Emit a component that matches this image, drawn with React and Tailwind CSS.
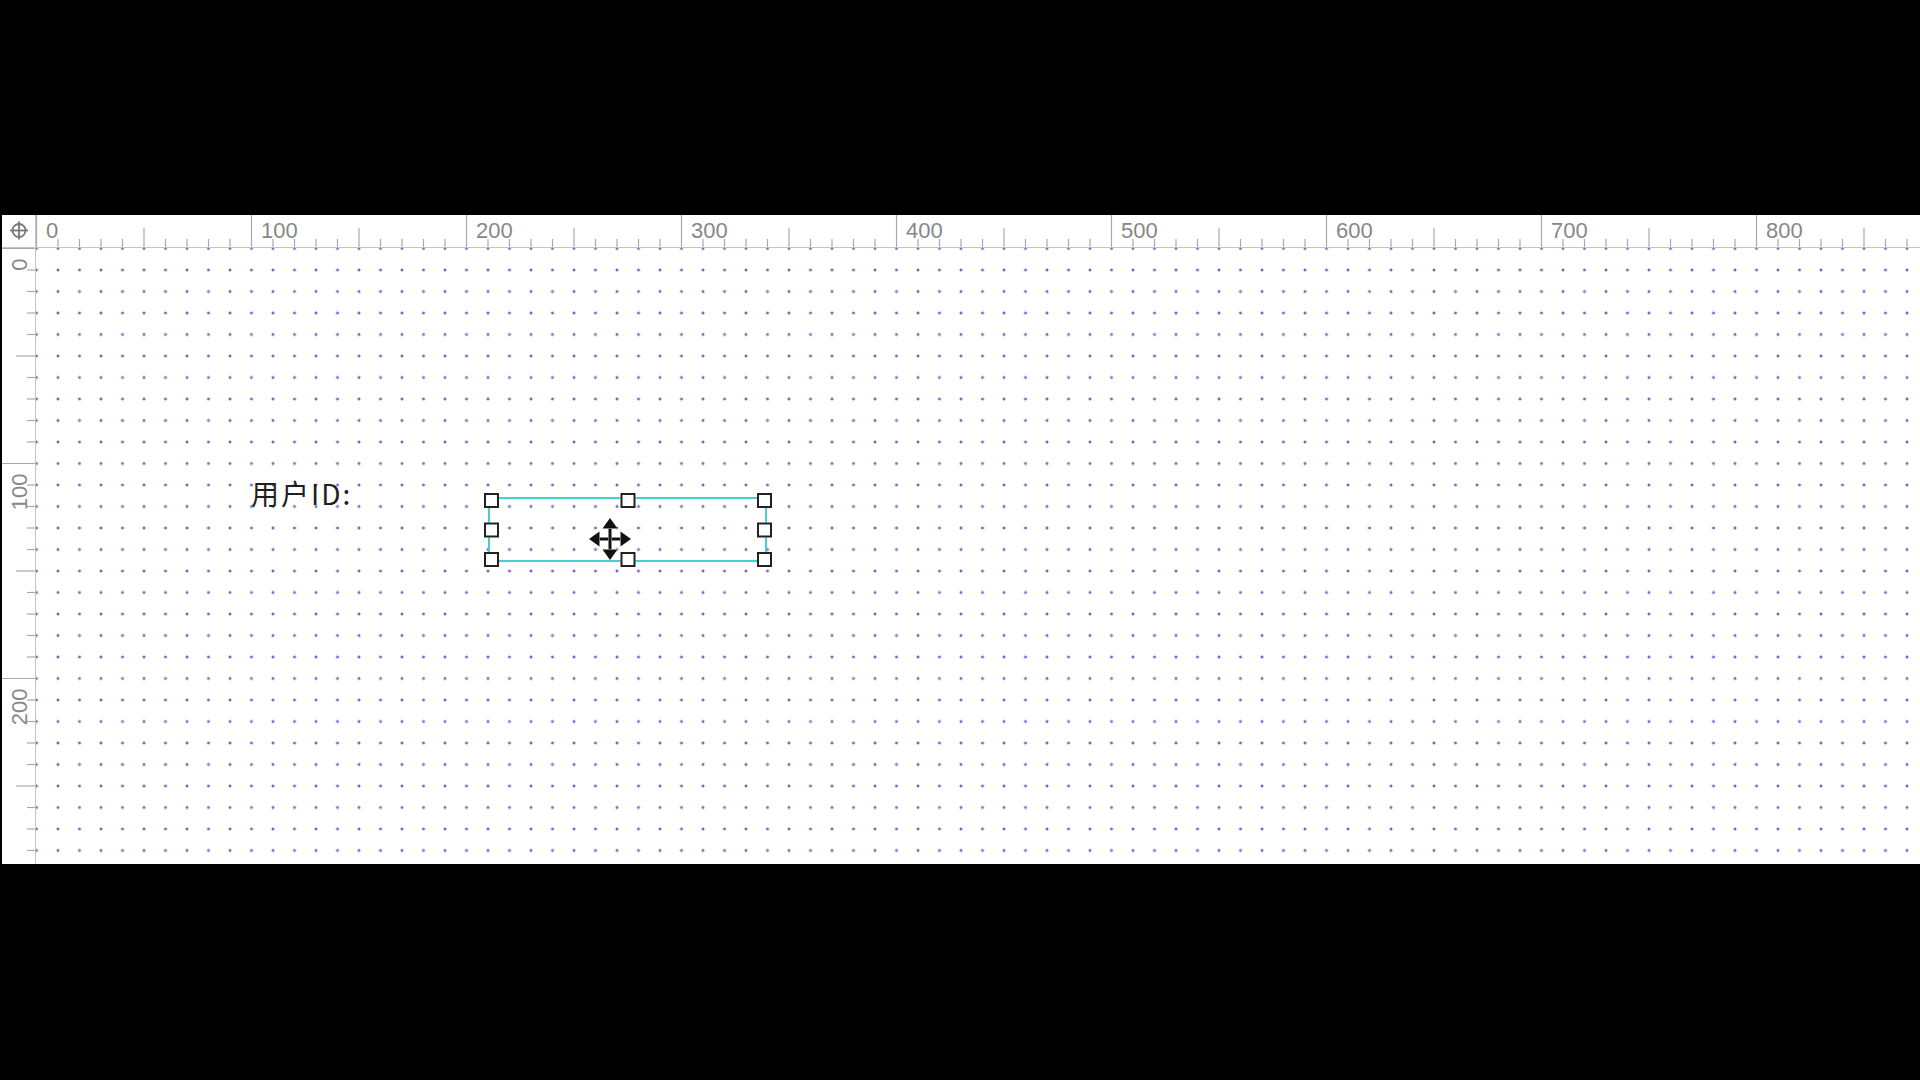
import React from 'react'

const STEP = 21.5
const TICK = '#a9a9a9'
const LABEL = '#878787'
const RULER_FONT = "'Liberation Sans', Arial, sans-serif"

function Crosshair(){
  return (
    <svg width="34" height="32" className="block">
      <circle cx="17" cy="15.5" r="6.5" fill="none" stroke="#777" strokeWidth="1.8" />
      <line x1="8" x2="26" y1="15.5" y2="15.5" stroke="#777" strokeWidth="1.8" />
      <line x1="17" x2="17" y1="6.5" y2="24.5" stroke="#777" strokeWidth="1.8" />
    </svg>
  )
}

function TopRuler(){
  const ticks = Array.from({ length: 89 }, (_, i) => i)
  return (
    <div className="relative h-[33px] flex-1 overflow-hidden border-b border-[#c4c4c4]">
      <svg width="1890" height="32" className="absolute left-0 top-0">
        {ticks.map(i => {
          const x = 0.5 + i * STEP
          const y1 = i % 10 === 0 ? 0 : i % 5 === 0 ? 13 : 24
          return <line key={i} x1={x} x2={x} y1={y1} y2={32} stroke={TICK} strokeWidth="1.2" />
        })}
        {ticks.filter(i => i % 10 === 0).map(i => (
          <text key={'l' + i} x={0.5 + i * STEP + 9.5} y={23} fontSize="22" fill={LABEL} fontFamily={RULER_FONT}>{i * 10}</text>
        ))}
      </svg>
    </div>
  )
}

function LeftRuler(){
  const ticks = Array.from({ length: 29 }, (_, i) => i)
  return (
    <div className="relative w-[34px] shrink-0 overflow-hidden border-r border-[#c4c4c4]">
      <svg width="33" height="616" className="absolute left-0 top-0">
        {ticks.map(i => {
          const y = 0.5 + i * STEP
          const x1 = i % 10 === 0 ? 0 : i % 5 === 0 ? 14 : 25
          return <line key={i} x1={x1} x2={33} y1={y} y2={y} stroke={TICK} strokeWidth="1.2" />
        })}
        {ticks.filter(i => i % 10 === 0).map(i => (
          <text key={'l' + i} transform={`translate(24.5 ${0.5 + i * STEP + 10}) rotate(-90)`} textAnchor="end" fontSize="22" fill={LABEL} fontFamily={RULER_FONT}>{i * 10}</text>
        ))}
      </svg>
    </div>
  )
}

function Handle({ className }){
  return <div className={`absolute h-[15px] w-[15px] border-2 border-[#222] bg-white ${className}`} />
}

function MoveCursor(){
  return (
    <svg width="42" height="42" viewBox="0 0 42 42" className="absolute left-[553px] top-[270px]">
      <g fill="#111" stroke="#fff" strokeWidth="0.8" paintOrder="stroke">
        <rect x="10" y="19.5" width="22" height="3" />
        <rect x="19.5" y="10" width="3" height="22" />
        <polygon points="21,0 13.5,10.5 28.5,10.5" />
        <polygon points="21,42 13.5,31.5 28.5,31.5" />
        <polygon points="0,21 10.5,13.5 10.5,28.5" />
        <polygon points="42,21 31.5,13.5 31.5,28.5" />
      </g>
    </svg>
  )
}

export default function App(){
  return (
    <div className="h-[1080px] w-full overflow-hidden bg-black pt-[215px]">
      <div className="ml-[2px] flex h-[649px] flex-col bg-white">
        <div className="flex">
          <div className="h-[33px] w-[34px] shrink-0 border-r border-b border-[#c4c4c4]">
            <Crosshair />
          </div>
          <TopRuler />
        </div>
        <div className="flex flex-1">
          <LeftRuler />
          <div className="relative flex-1 overflow-hidden bg-white bg-[radial-gradient(circle,#6a6ad2_1.1px,transparent_1.8px)] bg-size-[21.5px_21.5px] bg-position-[-10.25px_-10.25px]">
            <div className="absolute left-[215px] top-[231px] font-['Noto_Sans_CJK_SC',sans-serif] text-[28px] leading-none tracking-[2px] text-[#1f1f1f]">
              用户ID:
            </div>

            <div className="absolute left-[452px] top-[249px] h-[65px] w-[279px] border-2 border-[#45d0cc]">
              <Handle className="-left-[6.5px] -top-[6.5px]" />
              <Handle className="left-1/2 -top-[6.5px] -translate-x-1/2" />
              <Handle className="-right-[6.5px] -top-[6.5px]" />
              <Handle className="-left-[6.5px] top-1/2 -translate-y-1/2" />
              <Handle className="-right-[6.5px] top-1/2 -translate-y-1/2" />
              <Handle className="-left-[6.5px] -bottom-[6.5px]" />
              <Handle className="left-1/2 -bottom-[6.5px] -translate-x-1/2" />
              <Handle className="-right-[6.5px] -bottom-[6.5px]" />
            </div>

            <MoveCursor />
          </div>
        </div>
      </div>
    </div>
  )
}
